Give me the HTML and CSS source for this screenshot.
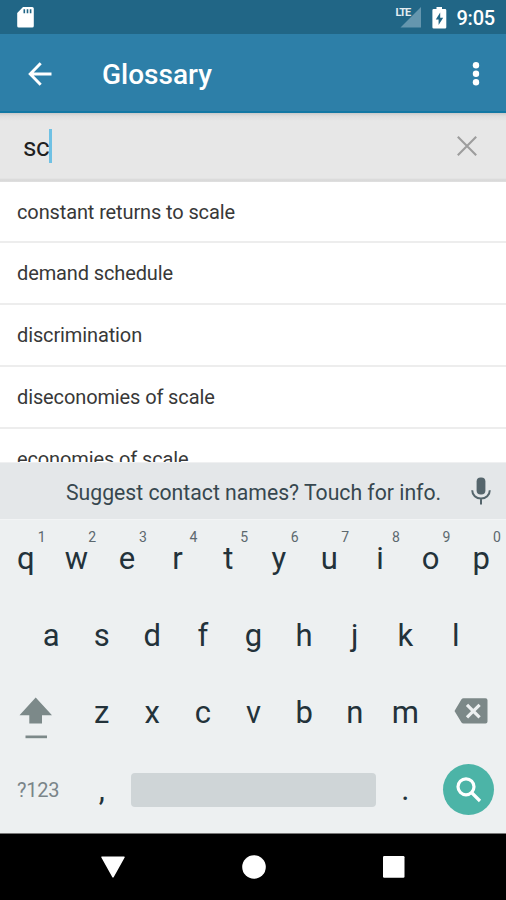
FILE: index.html
```html
<!DOCTYPE html>
<html lang="en">
<head>
<meta charset="utf-8">
<title>Glossary</title>
<link rel="stylesheet" href="styles.css">
</head>
<body>
<div class="screen">
  <header class="status">
    <svg class="sd" width="17" height="21" viewBox="0 0 17 21"><path fill="#fff" d="M6 0h9.200a1.600 1.600 0 0 1 1.600 1.600v17.300a1.600 1.600 0 0 1-1.600 1.600H1.800A1.600 1.600 0 0 1 .2 18.900V6z"/><path stroke="#216686" stroke-width="1.600" d="M7.300 2.300v4M10.500 2.300v4M13.600 2.300v4"/></svg>
    <div class="signal">
      <span class="lte">LTE</span>
      <svg width="21" height="21" viewBox="0 0 21 21"><path fill="#6596ae" d="M21 0v20.500H.5z"/></svg>
    </div>
    <svg class="battery" width="15" height="22" viewBox="0 0 15 22"><path fill="#fff" d="M4.500 0h5.500v2h3a1.300 1.300 0 0 1 1.300 1.300v16.900a1.300 1.300 0 0 1-1.300 1.300H1.700a1.300 1.300 0 0 1-1.300-1.300V3.300A1.300 1.300 0 0 1 1.700 2h2.800z"/><path fill="#216686" d="M8.200 5.500 3.800 12.500h2.800V18l4.600-7.200H8.200z"/></svg>
    <span class="clock">9:05</span>
  </header>
  <div class="appbar">
    <svg class="back" width="24" height="24" viewBox="0 0 24 24"><path fill="none" stroke="#fff" stroke-width="2.900" d="M23.500 12H2.500M12.700 1.300 2.200 12l10.500 10.700"/></svg>
    <h1 class="title">Glossary</h1>
    <svg class="more" width="8" height="26" viewBox="0 0 8 26"><g fill="#fff"><circle cx="4" cy="4.300" r="3.200"/><circle cx="4" cy="12.800" r="3.200"/><circle cx="4" cy="21.200" r="3.200"/></g></svg>
  </div>
  <div class="search">
    <span class="query">sc</span><span class="caret"></span>
    <svg class="clear" width="20" height="20" viewBox="0 0 20 20"><path stroke="#9d9d9d" stroke-width="2.100" d="m.8.800 18.400 18.400M19.200.800.800 19.200"/></svg>
  </div>
  <ul class="list">
    <li><span>constant returns to scale</span></li>
    <li><span>demand schedule</span></li>
    <li><span>discrimination</span></li>
    <li><span>diseconomies of scale</span></li>
    <li><span>economies of scale</span></li>
  </ul>
  <div class="suggest">
    <span class="hint">Suggest contact names? Touch for info.</span>
    <svg class="mic" width="20" height="28" viewBox="0 0 20 28"><rect x="5.600" y=".5" width="8.800" height="17" rx="4" fill="#55656c"/><path fill="none" stroke="#55656c" stroke-width="2" d="M1.200 13.300a8.800 8.300 0 0 0 17.600 0M10 21.500V27.500"/></svg>
  </div>
  <div class="keys">
    <div class="row">
      <span class="key">q<sup>1</sup></span><span class="key">w<sup>2</sup></span><span class="key">e<sup>3</sup></span><span class="key">r<sup>4</sup></span><span class="key">t<sup>5</sup></span><span class="key">y<sup>6</sup></span><span class="key">u<sup>7</sup></span><span class="key">i<sup>8</sup></span><span class="key">o<sup>9</sup></span><span class="key">p<sup>0</sup></span>
    </div>
    <div class="row">
      <span class="key">a</span><span class="key">s</span><span class="key">d</span><span class="key">f</span><span class="key">g</span><span class="key">h</span><span class="key">j</span><span class="key">k</span><span class="key">l</span>
    </div>
    <div class="row">
      <span class="wide"><svg width="34" height="42" viewBox="0 0 34 42"><path fill="#7c8989" d="M16.700.500 33 18.200H23V26.500H10.300v-8.300H.5z"/><path fill="#7c8989" d="M6.500 38.500h21.500v2.700H6.500z"/></svg></span>
      <span class="key">z</span><span class="key">x</span><span class="key">c</span><span class="key">v</span><span class="key">b</span><span class="key">n</span><span class="key">m</span>
      <span class="wide del"><svg width="34" height="26" viewBox="0 0 34 26"><path fill="#7c8888" d="M9.500.300H31.500A2 2 0 0 1 33.500 2.300v21.200a2 2 0 0 1-2 2H9.500a2.500 2.500 0 0 1-2-1L.5 13l7-11.700a2.500 2.500 0 0 1 2-1z"/><path stroke="#edf0f1" stroke-width="3.200" d="m13 6.800 12.600 12.600M25.600 6.800 13 19.400"/></svg></span>
    </div>
    <div class="row">
      <span class="wide sym">?123</span>
      <span class="key">,</span>
      <span class="space"></span>
      <span class="key">.</span>
      <span class="wide go"><span class="disc"><svg width="26" height="26" viewBox="0 0 26 26"><g fill="none" stroke="#fff" stroke-width="3.200"><circle cx="10" cy="9.800" r="8"/><path d="m15.500 15.500 8.500 8.500"/></g></svg></span></span>
    </div>
  </div>
  <nav class="nav">
    <svg width="26" height="24" viewBox="0 0 26 24"><path fill="#fff" stroke="#fff" stroke-width="1.500" stroke-linejoin="round" d="M2 2.200h22L13 21.800z"/></svg>
    <svg width="24" height="24" viewBox="0 0 24 24"><circle cx="12" cy="12" r="11.800" fill="#fff"/></svg>
    <svg width="22" height="24" viewBox="0 0 22 24"><rect y="1" width="21.500" height="21.800" rx="1.200" fill="#fff"/></svg>
  </nav>
</div>
</body>
</html>
```
FILE: styles.css
```css
* { box-sizing: border-box; }
body { margin: 0; font-family: Roboto, "Noto Sans", sans-serif; }
svg { display: block; flex: none; }
.screen { width: 506px; height: 900px; display: flex; flex-direction: column; overflow: hidden; background: #fff; }

.status { height: 34px; flex: none; display: flex; align-items: flex-start; background: #216686; padding: 7px 11px 0 17px; }
.signal { display: flex; margin-left: auto; }
.lte { font-size: 11px; line-height: 11px; font-weight: 700; letter-spacing: -1px; color: #e3edf1; width: 5px; white-space: nowrap; position: relative; }
.battery { margin-left: 11px; }
.clock { color: #fff; font-size: 20px; line-height: 22px; font-weight: 500; margin-left: 9px; letter-spacing: -.2px; }

.appbar { height: 79px; flex: none; display: flex; align-items: center; background: #2d7fa8; border-bottom: 2px solid #1277a3; padding: 2px 26px 0 28px; }
.title { margin: 2px 0 0 50px; color: #fff; font-size: 28px; line-height: 32px; font-weight: 500; }
.more { margin-left: auto; }

.search { height: 69px; flex: none; display: flex; align-items: center; padding: 0 29px 0 23px; background: linear-gradient(#c9c9c9, #dedede 3px, #e7e7e7 8px, #e7e7e7 65px, #d7d7d7 67px, #e0e0e0); }
.query { color: #202020; font-size: 26px; line-height: 32px; letter-spacing: -.4px; margin-top: -2px; }
.caret { width: 3px; height: 34px; background: #6fc1e4; margin: -4px 0 0 0; }
.clear { margin: -3px 0 0 auto; }

.list { height: 280px; flex: none; overflow: hidden; margin: 0; padding: 0; list-style: none; }
.list li { height: 62px; display: flex; align-items: center; border-bottom: 2px solid #ededed; padding: 0 17px; color: #383838; font-size: 20px; letter-spacing: -.12px; }
.list li:first-child { height: 61px; }

.suggest { height: 57px; flex: none; display: flex; align-items: center; background: #e4e7e9; border-top: 1px solid #eff0f1; padding: 2px 15px 0 66px; color: #37474f; font-size: 22.500px; }
.hint { white-space: nowrap; transform: scaleX(.942); transform-origin: left; width: 380px; }
.mic { margin: -2px 0 0 auto; }

.keys { height: 314px; flex: none; background: #edf0f1; border-top: 1px solid #f2f4f5; padding-bottom: 5px; display: flex; flex-direction: column; color: #23323a; }
.row { flex: 1; display: flex; justify-content: center; align-items: center; }
.row:last-child { margin-bottom: 0; }
.key { width: 50.600px; flex: none; text-align: center; font-size: 31px; line-height: 36px; position: relative; padding-left: 1px; }
.key sup { position: absolute; right: 5px; top: -12px; font-size: 14px; line-height: 16px; color: #5c686e; font-weight: 400; }
.wide { width: 75.900px; flex: none; display: flex; align-items: center; padding-left: 19px; }
.wide svg { margin-top: 10px; }
.del { padding-left: 24px; }
.del svg { margin-top: -3px; }
.sym { font-size: 20px; padding-left: 17px; color: #7a8589; letter-spacing: -.2px; }
.space { width: 245px; height: 34px; margin: 0 4px; flex: none; border-radius: 4px; background: #cfd5d7; }
.go { padding-left: 13px; }
.disc { width: 51px; height: 51px; flex: none; border-radius: 50%; background: #4cb4a7; display: flex; align-items: center; justify-content: center; }
.wide .disc svg { margin: 0; }

.nav { height: 67px; flex: none; background: #000; border-top: 1px solid #777; display: flex; align-items: center; padding-left: 100px; gap: 116px; }
.nav svg:last-child { margin-left: 1px; }
```
